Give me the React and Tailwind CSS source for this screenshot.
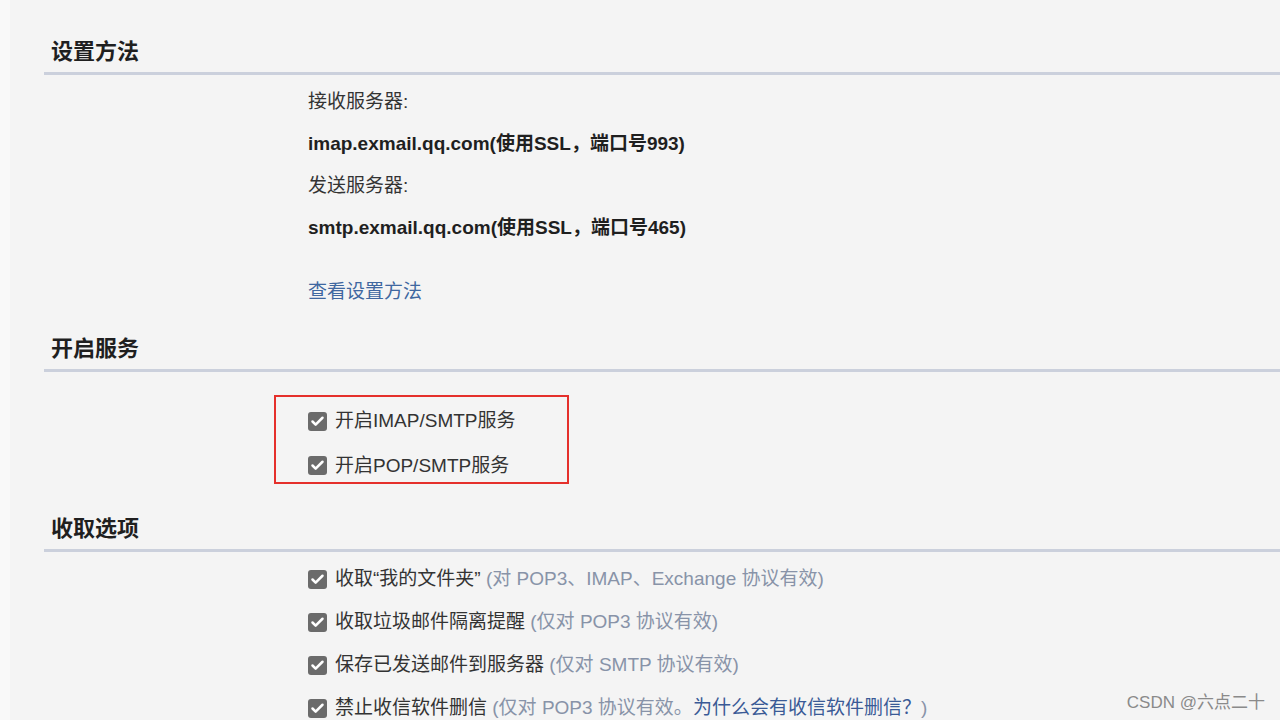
import { Check } from "lucide-react";

const font = { fontFamily: '"Liberation Sans", Arial, "Noto Sans CJK SC", sans-serif' };

function Box() {
  return (
    <span className="w-[19px] h-[19px] rounded-[3px] bg-[#6b6b6b] flex items-center justify-center shrink-0">
      <Check size={15} strokeWidth={4} className="text-white" />
    </span>
  );
}

function Heading({ children }) {
  return (
    <div className="h-[45px] flex items-center pl-[7px] border-b-[3px] border-[#cbd0dc] text-[22px] font-bold text-[#1f1f1f]">
      {children}
    </div>
  );
}

function Row({ children }) {
  return (
    <div className="h-[43px] flex items-center gap-[8px] text-[19px] text-[#333]">
      <Box />
      <span>{children}</span>
    </div>
  );
}

export default function App() {
  return (
    <div className="w-[1280px] h-[720px] flex bg-[#f4f4f4] overflow-hidden relative" style={font}>
      <div className="w-[10px] bg-[#f9f9f9] shrink-0"></div>

      <div className="flex-1 pl-[34px] pt-[30px]">
        {/* 设置方法 */}
        <Heading>设置方法</Heading>
        <div className="pl-[264px] mt-[6px] text-[19px] text-[#333]">
          <div className="h-[42px] flex items-center">接收服务器:</div>
          <div className="h-[42px] flex items-center font-bold text-[#1f1f1f]">imap.exmail.qq.com(使用SSL，端口号993)</div>
          <div className="h-[42px] flex items-center">发送服务器:</div>
          <div className="h-[42px] flex items-center font-bold text-[#1f1f1f]">smtp.exmail.qq.com(使用SSL，端口号465)</div>
          <div className="h-[42px] flex items-center mt-[22px] text-[#3f67a0]">查看设置方法</div>
        </div>

        {/* 开启服务 */}
        <div className="mt-[14px]">
          <Heading>开启服务</Heading>
        </div>
        <div className="pl-[230px] mt-[23px]">
          <div className="w-[295px] h-[89px] border-2 border-[#e5302b] pl-[32px] pt-[8px] flex flex-col gap-[12px]">
            <div className="h-[34px] flex items-center gap-[8px] text-[19px] text-[#333]">
              <Box />
              <span>开启IMAP/SMTP服务</span>
            </div>
            <div className="h-[34px] flex items-center gap-[8px] text-[19px] text-[#333]">
              <Box />
              <span>开启POP/SMTP服务</span>
            </div>
          </div>
        </div>

        {/* 收取选项 */}
        <div className="mt-[23px]">
          <Heading>收取选项</Heading>
        </div>
        <div className="pl-[264px] mt-[6px]">
          <Row>
            收取“我的文件夹” <span className="text-[#8893a8]">(对 POP3、IMAP、Exchange 协议有效)</span>
          </Row>
          <Row>
            收取垃圾邮件隔离提醒 <span className="text-[#8893a8]">(仅对 POP3 协议有效)</span>
          </Row>
          <Row>
            保存已发送邮件到服务器 <span className="text-[#8893a8]">(仅对 SMTP 协议有效)</span>
          </Row>
          <Row>
            禁止收信软件删信{" "}
            <span className="text-[#8893a8]">
              (仅对 POP3 协议有效。<span className="text-[#3a5a96]">为什么会有收信软件删信？</span>)
            </span>
          </Row>
        </div>
      </div>

      <div className="absolute right-[15px] bottom-[5px] text-[17px] text-[#8a8a8a]">CSDN @六点二十</div>
    </div>
  );
}
